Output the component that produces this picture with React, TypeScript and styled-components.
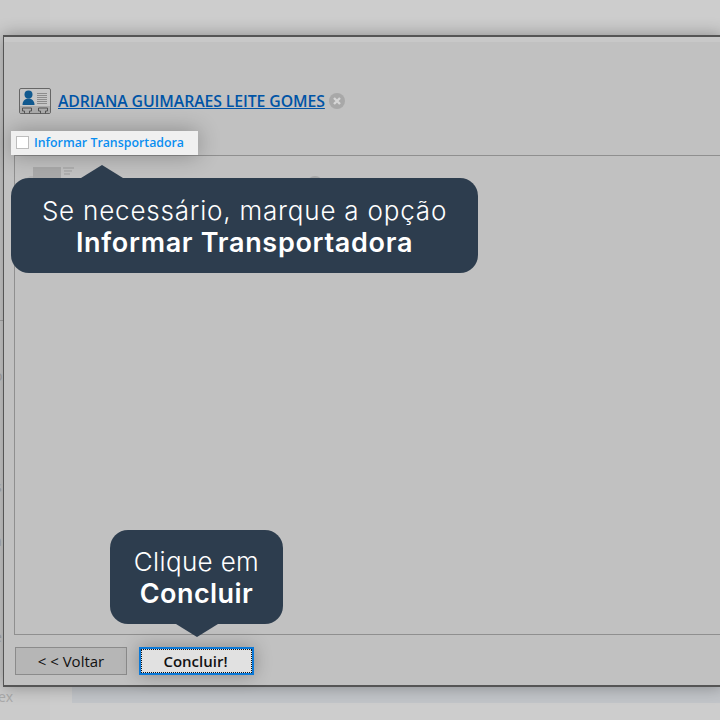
import { createGlobalStyle } from "styled-components";
import styled from "styled-components";

const Global = createGlobalStyle`
  html, body {
    margin: 0;
    padding: 0;
    width: 720px;
    height: 720px;
    overflow: hidden;
    background: #cccccc;
    font-family: "Open Sans", sans-serif;
  }
`;

const Page = styled.div`
  position: relative;
  width: 720px;
  height: 720px;
  overflow: hidden;
  background: #cdcdcd;
  padding: 35px 0 0 3px;
  box-sizing: border-box;
`;

const BackdropStrip = styled.div`
  position: absolute;
  left: 72px;
  right: 0;
  top: 680px;
  height: 23px;
  background: #c2c5c9;
`;

const BackdropColumn = styled.div`
  position: absolute;
  left: 0;
  top: 0;
  width: 50px;
  height: 100%;
  background: #cbcbcb;
`;

const BackdropText = styled.span<{ $top: number; $left: number }>`
  position: absolute;
  left: ${(p) => p.$left}px;
  top: ${(p) => p.$top}px;
  font-size: 14px;
  line-height: 18px;
  color: #a9a9a9;
`;

const BackdropRule = styled.div`
  position: absolute;
  left: 0;
  top: 320px;
  width: 3px;
  height: 1px;
  background: #a5a5a5;
`;

const Dialog = styled.div`
  position: relative;
  box-sizing: border-box;
  width: 720px;
  height: 652px;
  display: flex;
  flex-direction: column;
  background: #c1c1c1;
  border: 1px solid #555555;
  border-top-width: 2px;
  border-right: none;
  border-bottom-width: 2px;
  box-shadow: 0 0 16px rgba(0, 0, 0, 0.32);
`;

const TitleBar = styled.div`
  height: 5px;
  flex: none;
  background: #c8c8c8;
`;

const ClientRow = styled.div`
  display: flex;
  align-items: center;
  height: 30px;
  margin: 44px 0 0 15px;
`;

const ClientLink = styled.a`
  margin-left: 6px;
  font-size: 15.8px;
  font-weight: 600;
  letter-spacing: -0.09px;
  color: #0054a6;
  text-decoration: underline;
`;

const RemoveBadge = styled.span`
  margin-left: 4px;
  width: 16px;
  height: 16px;
  display: grid;
  place-items: center;
`;

const Panel = styled.div`
  flex: 1;
  margin: 39px 0 0 10px;
  border: 1px solid #8f8f8f;
  border-right: none;
  min-height: 0;
`;

const GhostRow = styled.div`
  display: flex;
  align-items: flex-start;
  gap: 231px;
  padding: 11px 0 0 11px;
`;

const GhostBadge = styled.span`
  width: 16px;
  height: 16px;
  margin-top: 9px;
  border-radius: 50%;
  background: #a8a8a8;
`;

const Footer = styled.div`
  flex: none;
  height: 50px;
  display: flex;
  align-items: flex-start;
  gap: 12px;
  padding: 12px 0 0 11px;
  box-sizing: border-box;
`;

const BaseButton = styled.button`
  box-sizing: border-box;
  height: 28px;
  padding: 0;
  font-family: "Open Sans", sans-serif;
  font-size: 15px;
  color: #111111;
`;

const BackButton = styled(BaseButton)`
  width: 112px;
  background: #b6b6b6;
  border: 1px solid #8b8b8b;
`;

const FinishButton = styled(BaseButton)`
  width: 115px;
  padding-right: 2px;
  font-weight: 600;
  background: #e1e1e1;
  border: 2px solid #0a78d7;
  outline: 1px dotted #111111;
  outline-offset: -3px;
  box-shadow: 0 0 18px rgba(0, 0, 0, 0.3);
`;

const Highlight = styled.label`
  position: absolute;
  left: 11px;
  top: 131px;
  width: 187px;
  height: 24px;
  display: flex;
  align-items: center;
  gap: 5px;
  padding: 0 0 1px 5px;
  box-sizing: border-box;
  background: #f0f0f0;
  box-shadow: 0 0 22px rgba(0, 0, 0, 0.3);
  font-size: 12.35px;
  font-weight: 600;
  color: #0a8ef0;
`;

const CheckBox = styled.span`
  width: 11px;
  height: 11px;
  background: #ffffff;
  border: 1px solid #bdbdbd;
`;

const Bubble = styled.div<{ $left: number; $top: number; $width: number; $height: number }>`
  position: absolute;
  left: ${(p) => p.$left}px;
  top: ${(p) => p.$top}px;
  width: ${(p) => p.$width}px;
  height: ${(p) => p.$height}px;
  box-sizing: border-box;
  padding-top: 2px;
  display: flex;
  flex-direction: column;
  align-items: center;
  justify-content: center;
  background: #2d3d4e;
  border-radius: 18px;
  color: #ffffff;
  font-family: Inter, sans-serif;
  font-size: 26px;
  line-height: 32px;
`;

const BubbleLine = styled.span<{ $tracking: number }>`
  font-weight: 300;
  letter-spacing: ${(p) => p.$tracking}px;
`;

const BubbleBold = styled.strong<{ $tracking: number }>`
  font-size: 27px;
  font-weight: 600;
  letter-spacing: ${(p) => p.$tracking}px;
`;

const ArrowUp = styled.span`
  position: absolute;
  left: 70px;
  top: -13px;
  width: 0;
  height: 0;
  border-left: 21px solid transparent;
  border-right: 21px solid transparent;
  border-bottom: 13px solid #2d3d4e;
`;

const ArrowDown = styled.span`
  position: absolute;
  left: 66px;
  bottom: -13px;
  width: 0;
  height: 0;
  border-left: 21px solid transparent;
  border-right: 21px solid transparent;
  border-top: 13px solid #2d3d4e;
`;

function CardIcon() {
  return (
    <svg width="33" height="27" viewBox="0 0 33 27" fill="none">
      <rect x="0.5" y="0.5" width="31" height="25" rx="1.500" fill="#c6c6c6" stroke="#666666" />
      <rect x="1" y="18" width="30" height="7" fill="#ababab" />
      <circle cx="9.500" cy="6.500" r="4" fill="#10598f" />
      <path d="M3.500 17c0-4 2.500-6.500 6-6.500s6 2.500 6 6.500z" fill="#10598f" />
      <path d="M18 5.500h10M18 7.500h10M18 9.500h10M18 11.500h10M18 13.500h10M18 15.500h10" stroke="#8c8c8c" />
      <path d="M5.500 25.500v-2.500h-2v-3h9v3h-2v2.500M21.500 25.500v-2.500h-2v-3h9v3h-2v2.500" stroke="#555555" />
    </svg>
  );
}

function GhostCardIcon() {
  return (
    <svg width="50" height="14" viewBox="0 0 50 14" fill="none">
      <path d="M1 14v-3l3-2h3v5z" fill="#b4b4b4" />
      <rect x="7" y="0" width="28" height="14" fill="#a9a9a9" />
      <path d="M37 1h11M38 4h8M38 7h6" stroke="#a9a9a9" strokeWidth="1.500" />
    </svg>
  );
}

const edgeLetters = [
  { text: "o", top: 367, left: -6 },
  { text: "s", top: 478, left: -5 },
  { text: "a", top: 532, left: -6 },
  { text: "e", top: 628, left: -6 },
  { text: "ex", top: 688, left: -2 },
];

export default function App() {
  return (
    <Page>
      <Global />
      <BackdropColumn />
      <BackdropStrip />
      <BackdropRule />
      {edgeLetters.map((letter) => (
        <BackdropText key={letter.top} $top={letter.top} $left={letter.left}>
          {letter.text}
        </BackdropText>
      ))}
      <Dialog>
        <TitleBar />
        <ClientRow>
          <CardIcon />
          <ClientLink href="#">ADRIANA GUIMARAES LEITE GOMES</ClientLink>
          <RemoveBadge>
            <svg width="16" height="16" viewBox="0 0 16 16">
              <circle cx="8" cy="8" r="8" fill="#a8a8a8" />
              <path d="M5 5l6 6M11 5l-6 6" stroke="#d6d6d6" strokeWidth="2.400" />
            </svg>
          </RemoveBadge>
        </ClientRow>
        <Panel>
          <GhostRow>
            <GhostCardIcon />
            <GhostBadge />
          </GhostRow>
        </Panel>
        <Footer>
          <BackButton>&lt; &lt; Voltar</BackButton>
          <FinishButton>Concluir!</FinishButton>
        </Footer>
      </Dialog>
      <Highlight>
        <CheckBox />
        Informar Transportadora
      </Highlight>
      <Bubble $left={11} $top={178} $width={467} $height={95}>
        <ArrowUp />
        <BubbleLine $tracking={0.8}>Se necessário, marque a opção</BubbleLine>
        <BubbleBold $tracking={0.7}>Informar Transportadora</BubbleBold>
      </Bubble>
      <Bubble $left={110} $top={530} $width={173} $height={94}>
        <ArrowDown />
        <BubbleLine $tracking={0.35}>Clique em</BubbleLine>
        <BubbleBold $tracking={0.45}>Concluir</BubbleBold>
      </Bubble>
    </Page>
  );
}
